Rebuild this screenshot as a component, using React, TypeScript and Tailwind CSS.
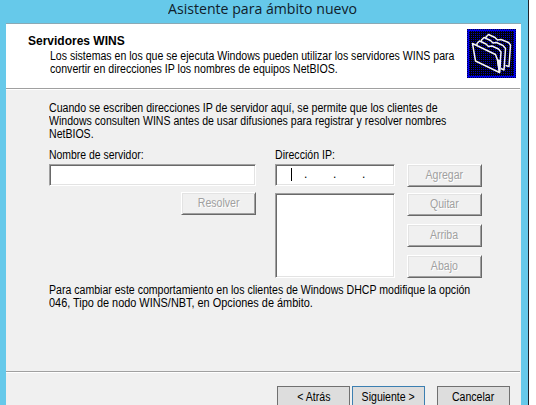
import type { ReactNode } from "react";

const sx = "block w-max origin-left whitespace-nowrap";

function Line({ children, scale = "scale-x-[0.88]" }: { children: ReactNode; scale?: string }) {
  return <span className={`${sx} ${scale}`}>{children}</span>;
}

function Disabled({ children, className = "" }: { children: ReactNode; className?: string }) {
  return (
    <button
      className={`flex h-[23px] w-[75px] items-center justify-center border border-t-white border-l-white border-r-[#696969] border-b-[#696969] bg-[#f0f0f0] text-[#a0a0a0] shadow-[inset_1px_1px_0_#e3e3e3,inset_-1px_-1px_0_#a0a0a0] ${className}`}
    >
      <span className="scale-x-[0.88] whitespace-nowrap [text-shadow:1px_1px_0_#fff]">{children}</span>
    </button>
  );
}

function NavButton({ children, className = "border-[#707070]" }: { children: ReactNode; className?: string }) {
  return (
    <button className={`flex h-[23px] w-[73px] items-center justify-center border bg-[#dddddd] ${className}`}>
      <span className="scale-x-[0.88] whitespace-nowrap">{children}</span>
    </button>
  );
}

const sunken =
  "border border-t-[#a0a0a0] border-l-[#a0a0a0] border-r-white border-b-white bg-white shadow-[inset_1px_1px_0_#696969,inset_-1px_-1px_0_#e3e3e3]";

function FoldersIcon() {
  return (
    <svg width="49" height="49" viewBox="0 0 49 49" className="block">
      <defs>
        <pattern id="dither" width="2" height="2" patternUnits="userSpaceOnUse">
          <rect width="2" height="2" fill="#000008" />
          <rect width="1" height="1" fill="#0000c0" />
        </pattern>
        <pattern id="edge" width="2" height="2" patternUnits="userSpaceOnUse">
          <rect width="2" height="2" fill="#0000f0" />
          <rect width="1" height="1" fill="#000040" />
        </pattern>
      </defs>
      <rect width="49" height="49" fill="url(#edge)" />
      <rect x="2" y="2" width="45" height="45" fill="url(#dither)" />
      <g fill="url(#dither)" stroke="#f4f4f4" strokeWidth="1.5" strokeLinejoin="round">
        <path d="M19 10V8L21.5 5.5L28 8.5L30.5 11L34 10.5L41.5 13.5L43.5 16L42 37.5L38.5 36.5" />
        <path d="M14.5 13V11L17 8.5L23.5 11.5L26 14L29.5 13.5L36 16.5L38.5 19.5L37 41L34 39.5" />
        <path d="M10 16.5V14.5L12.5 12L19 15L21.5 17.5L25 17L31.5 20L34 23L32.5 43" />
        <path d="M5.5 14.5L28.5 25.5L30.5 31L32.5 43.5L8.5 32L5.5 14.5Z" />
        <path d="M30.5 31L33.5 32L32.5 43.5Z" fill="#f4f4f4" />
      </g>
    </svg>
  );
}

export default function App() {
  return (
    <div className="flex h-[405px] w-[536px] overflow-hidden bg-white font-['Liberation_Sans',Arial,sans-serif] text-[12px] leading-[13px] text-black">
      <div className="flex w-[529px] shrink-0 flex-col border-r border-[#20242c] bg-[#66c9ea] pr-[7px] pl-[6px]">
        <header className="h-[23px] shrink-0 pl-[162px] font-['Open_Sans',sans-serif] text-[15px] leading-[16px] text-[#10202a]">
          <Line scale="scale-x-[0.941]">Asistente para ámbito nuevo</Line>
        </header>
        <main className="flex flex-1 flex-col border-t border-[#8aa9b5] bg-[#f0f0f0]">
          <section className="flex h-[64px] justify-between bg-white pt-[5px] pr-[5px] pl-[22px]">
            <div className="pt-[6px]">
              <h1 className="pb-[2px] font-bold">Servidores WINS</h1>
              <div className="w-[410px] pl-[22px]">
                <Line>Los sistemas en los que se ejecuta Windows pueden utilizar los servidores WINS para</Line>
                <Line scale="scale-x-[0.883]">convertir en direcciones IP los nombres de equipos NetBIOS.</Line>
              </div>
            </div>
            <FoldersIcon />
          </section>
          <div className="mr-px h-[2px] border-t border-[#a0a0a0] bg-white" />
          <section className="h-[281px] pt-[12px] pl-[43px]">
            <div>
              <Line scale="scale-x-[0.883]">Cuando se escriben direcciones IP de servidor aquí, se permite que los clientes de</Line>
              <Line>Windows consulten WINS antes de usar difusiones para registrar y resolver nombres</Line>
              <Line>NetBIOS.</Line>
            </div>
            <div className="mt-[8px] flex h-[129px]">
              <div className="w-[207px]">
                <Line scale="scale-x-[0.87]">Nombre de servidor:</Line>
                <div className={`mt-[2px] h-[22px] ${sunken}`} />
                <Disabled className="mt-[6px] ml-auto">Resolver</Disabled>
              </div>
              <div className="ml-[19px] w-[120px]">
                <Line>Dirección IP:</Line>
                <div className={`mt-[2px] flex h-[22px] pt-[2px] pl-[15px] ${sunken}`}>
                  <span className="mt-[1px] h-[13px] w-px bg-black" />
                  <span className="ml-[12px] w-[29px] leading-[15px]">.</span>
                  <span className="w-[29px] leading-[15px]">.</span>
                  <span className="leading-[15px]">.</span>
                </div>
                <div className={`mt-[7px] h-[85px] ${sunken}`} />
              </div>
              <div className="ml-[12px] pt-[15px]">
                <Disabled>Agregar</Disabled>
                <Disabled className="mt-[6px]">Quitar</Disabled>
                <Disabled className="mt-[8px]">Arriba</Disabled>
                <Disabled className="mt-[8px]">Abajo</Disabled>
              </div>
            </div>
            <div className="mt-[6px]">
              <Line>Para cambiar este comportamiento en los clientes de Windows DHCP modifique la opción</Line>
              <Line scale="scale-x-[0.909]">046, Tipo de nodo WINS/NBT, en Opciones de ámbito.</Line>
            </div>
          </section>
          <div className="mr-px h-[2px] shrink-0 border-t border-[#a0a0a0] bg-white" />
          <footer className="flex h-[32px] shrink-0 overflow-hidden pt-[13px] pl-[271px]">
            <NavButton>&lt; Atrás</NavButton>
            <NavButton className="ml-[2px] border-[#3c7fb1]">Siguiente &gt;</NavButton>
            <NavButton className="ml-[12px] border-[#707070]">Cancelar</NavButton>
          </footer>
        </main>
      </div>
    </div>
  );
}
